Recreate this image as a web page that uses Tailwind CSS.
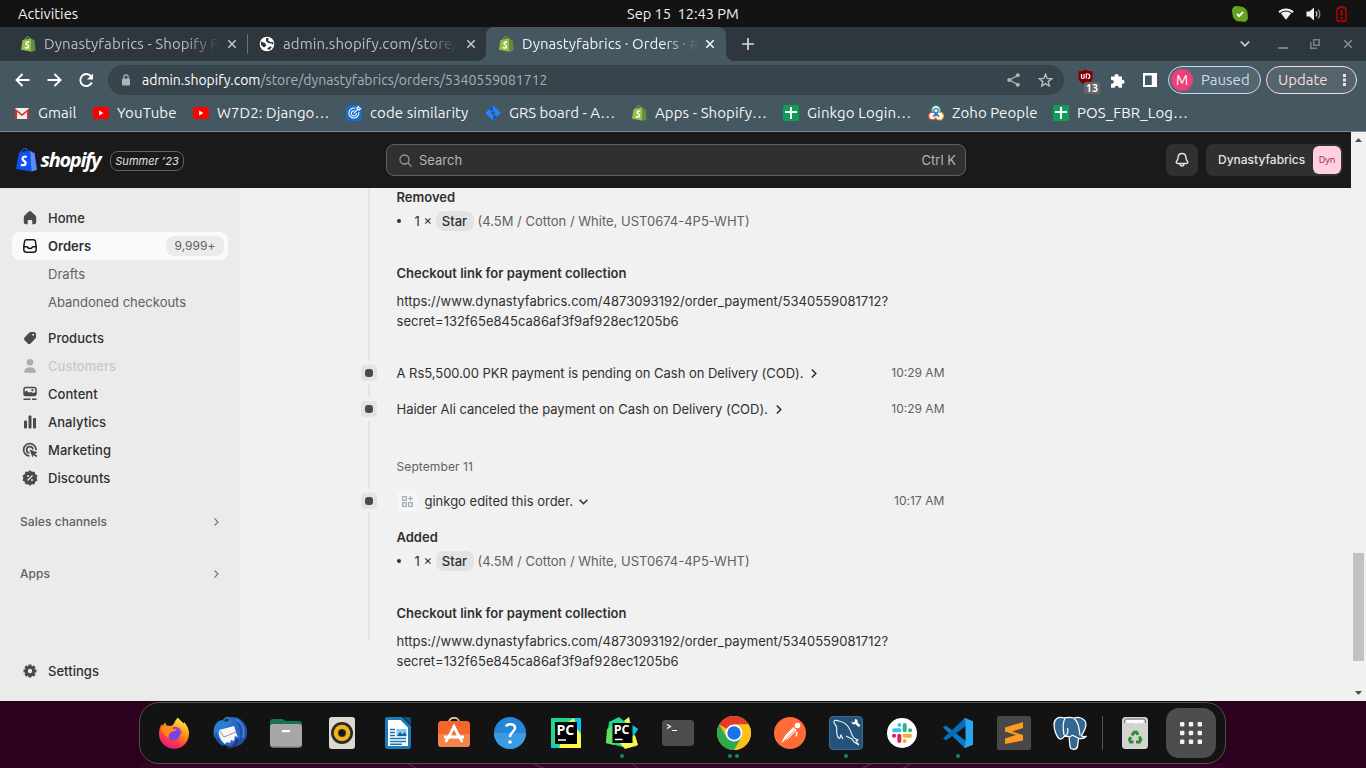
<!DOCTYPE html>
<html lang="en">
<head>
<meta charset="utf-8">
<title>Dynastyfabrics · Orders</title>
<script src="https://cdn.jsdelivr.net/npm/@tailwindcss/browser@4"></script>
</head>
<body class="w-[1366px] h-[768px] overflow-hidden flex flex-col bg-[#2c001e] font-['Inter',sans-serif] text-[13px] leading-5 text-[#303030]">

<svg class="hidden">
  <symbol id="bag" viewBox="0 0 16 16">
    <path d="M2.600 3.900 11 2.200l1.300 13.600L1 13.800z" fill="#95bf47"/>
    <path d="M11 2.300l1.700 1.300 1.900.3 1 10.600-4.600 1.400z" fill="#5e8e3e"/>
    <path d="M4.800 4.600C5 2.300 6.600.6 8 .7c1 .1 1.500 1.100 1.600 2.700" fill="none" stroke="#7fae3b" stroke-width="1"/>
    <path d="M9.200 6.300C8.300 5.700 6.100 5.700 6.100 7.400c0 1.500 2.600 1.500 2.400 3.200-.2 1.700-2.300 1.800-3.600.8" fill="none" stroke="#fff" stroke-width="1.500"/>
  </symbol>
  <symbol id="yt" viewBox="0 0 16 12"><rect width="16" height="12" rx="2.500" fill="#f00"/><path d="M6.200 3.500v5L10.400 6z" fill="#fff"/></symbol>
  <symbol id="sheet" viewBox="0 0 16 16"><rect width="16" height="16" rx="1.500" fill="#0f9d58"/><path d="M7 2h2v4h5v2H9v6H7V8H2V6h5z" fill="#fff"/></symbol>
  <symbol id="x" viewBox="0 0 10 10"><path d="M1.300 1.300l7.400 7.400M8.700 1.300L1.300 8.700" fill="none" stroke="currentColor" stroke-width="1.500"/></symbol>
</svg>

<!-- System bar -->
<div class="h-[27px] shrink-0 bg-[#131313] text-[#f2f2f2] font-[Ubuntu,'Noto_Sans',sans-serif] text-[14.67px] leading-[27px] flex relative">
  <span class="ml-[18px] w-[200px]">Activities</span>
  <span class="absolute left-[627px] whitespace-pre tracking-[-0.05px]">Sep 15  12:43 PM</span>
  <div class="ml-auto flex items-center pr-[19.5px]">
    <svg class="w-4 h-4 mr-[29.500px]" viewBox="0 0 16 16"><path d="M5 0c1.500 0 2 .5 3.500.5A7.500 7.500 0 0 1 15.700 9c0 1 .3 1.500.3 2.500A4.500 4.500 0 0 1 11.500 16c-1.500 0-2-.4-3.500-.4A7.500 7.500 0 0 1 .4 8C.4 6.500 0 6 0 4.800A4.800 4.800 0 0 1 5 0z" fill="#62a420"/><path d="M5 8l2.200 2.200L11 6" fill="none" stroke="#fff" stroke-width="1.800"/></svg>
    <svg class="w-4 h-3 mr-3" viewBox="0 0 16 12"><path d="M.3 3.600a11 11 0 0 1 15.400 0L14.300 5a9 9 0 0 0-12.600 0zM2.900 5.300a8 8 0 0 1 10.200 0L8 11.800z" fill="#f2f2f2"/></svg>
    <svg class="w-4 h-3.5 mr-[14px]" viewBox="0 0 16 14"><path d="M.5 4.500h3L8 .5v13l-4.500-4h-3z" fill="#f2f2f2"/><path d="M9.800 4.500a3.500 3.500 0 0 1 0 5" fill="none" stroke="#ccc" stroke-width="1.300"/><path d="M12 2.500a6.500 6.500 0 0 1 0 9" fill="none" stroke="#8b8b8b" stroke-width="1.300"/></svg>
    <svg class="w-[11px] h-4" viewBox="0 0 11 16"><path d="M3.500 2V1h4v1h1.500q1 0 1 1v11q0 1-1 1H2q-1 0-1-1V3q0-1 1-1z" fill="none" stroke="#c80000" stroke-width="1.300"/><path d="M5.500 4v5.500M5.500 11v2" stroke="#c80000" stroke-width="1.800"/></svg>
  </div>
</div>

<!-- Tab strip -->
<div class="h-[34px] shrink-0 bg-[#2d373d] text-[#b9bfc3] font-[Ubuntu,'Noto_Sans',sans-serif] text-[15px] leading-[34px] flex items-center">
  <div class="w-[247px] shrink-0 pl-5 flex items-center">
    <svg class="w-4 h-4 shrink-0"><use href="#bag"/></svg>
    <span class="ml-2 w-[176px] whitespace-nowrap tracking-[0.08px] [mask-image:linear-gradient(to_right,#000_80%,transparent)]">Dynastyfabrics - Shopify P</span>
    <svg class="ml-[7px] w-[10px] h-[10px] text-[#c6cacd]"><use href="#x"/></svg>
  </div>
  <div class="w-px h-5 bg-[#66737b]"></div>
  <div class="w-[238px] shrink-0 pl-[11px] flex items-center">
    <svg class="w-4 h-4 shrink-0" viewBox="0 0 16 16"><circle cx="8" cy="8" r="7.300" fill="#fff"/><path d="M2 5.500l4 1.500 1.500 2.500L5 11.500 2 9zM7 2l3 .5L9 4.500 11.500 6H14l.5 3-2-1.500L9 7 7 5z" fill="#2d373d"/><path d="M8 12.500l3-2 2 .5-2.500 3z" fill="#2d373d"/></svg>
    <span class="ml-2 w-[174px] whitespace-nowrap tracking-[0.08px] [mask-image:linear-gradient(to_right,#000_82%,transparent)]">admin.shopify.com/store/</span>
    <svg class="ml-[9px] w-[10px] h-[10px] text-[#c6cacd]"><use href="#x"/></svg>
  </div>
  <div class="w-[240px] h-[34px] shrink-0 pl-3 flex items-center bg-[#455760] rounded-t-lg text-[#f0f2f3] relative">
    <span class="absolute -left-2 bottom-0 w-2 h-2 bg-[radial-gradient(circle_at_0_0,transparent_7.5px,#455760_8px)]"></span>
    <span class="absolute -right-2 bottom-0 w-2 h-2 bg-[radial-gradient(circle_at_100%_0,transparent_7.5px,#455760_8px)]"></span>
    <svg class="w-4 h-4 shrink-0"><use href="#bag"/></svg>
    <span class="ml-2 w-[176px] whitespace-nowrap tracking-[0.04px] [mask-image:linear-gradient(to_right,#000_80%,transparent)]">Dynastyfabrics · Orders · #</span>
    <svg class="ml-[7px] w-[10px] h-[10px] text-white"><use href="#x"/></svg>
  </div>
  <svg class="ml-4 w-3 h-3" viewBox="0 0 12 12"><path d="M6 0v12M0 6h12" stroke="#d5d9db" stroke-width="1.700"/></svg>
  <svg class="ml-auto w-[10px] h-2" viewBox="0 0 10 8"><path d="M.8 1.500L5 5.800l4.200-4.300" fill="none" stroke="#cfd3d5" stroke-width="1.700"/></svg>
  <svg class="ml-[28px] w-[10px] h-[10px]" viewBox="0 0 10 10"><path d="M0 9h10" stroke="#77848b" stroke-width="1.900"/></svg>
  <svg class="ml-[22px] w-[10px] h-[10px]" viewBox="0 0 10 10"><path d="M3.700.8h5.500v5.500H3.700zM.8 3v6.200H7" fill="none" stroke="#77848b" stroke-width="1.500"/></svg>
  <svg class="ml-[23px] mr-[13px] w-[10px] h-[10px] text-[#87939a]"><use href="#x"/></svg>
</div>

<!-- Toolbar -->
<div class="h-[38px] shrink-0 bg-[#455760] font-[Ubuntu,'Noto_Sans',sans-serif] text-[14px] flex items-center text-white">
  <svg class="ml-[15px] w-[15px] h-[14px]" viewBox="0 0 15 14"><path d="M14.500 7H1.800M7.500 1L1.500 7l6 6" fill="none" stroke="#fff" stroke-width="1.900"/></svg>
  <svg class="ml-[17px] w-[15px] h-[14px]" viewBox="0 0 15 14"><path d="M.5 7h12.700M7.500 1l6 6-6 6" fill="none" stroke="#fff" stroke-width="1.900"/></svg>
  <svg class="ml-[17px] w-[15px] h-[15px]" viewBox="0 0 15 15"><path d="M12.800 9.500A6 6 0 1 1 12 3.300" fill="none" stroke="#fff" stroke-width="1.900"/><path d="M14 .5v6H8z" fill="#fff"/></svg>
  <div class="ml-[14px] w-[956px] h-[30px] rounded-full bg-[#38444b] flex items-center shrink-0 pl-[14px] text-[#a9b2b7]">
    <svg class="w-2 h-3" viewBox="0 0 8 12"><rect y="4.500" width="8" height="7" rx=".8" fill="#adb5b9"/><path d="M1.800 5V3a2.200 2.200 0 0 1 4.400 0v2" fill="none" stroke="#adb5b9" stroke-width="1.200"/></svg>
    <span class="ml-3 whitespace-nowrap"><span class="text-white">admin.shopify.com</span>/store/dynastyfabrics/orders/5340559081712</span>
    <svg class="ml-auto w-[13px] h-[14px]" viewBox="0 0 13 14"><path d="M11 2.300L2.500 7l8.500 4.700" fill="none" stroke="#adb5b9" stroke-width="1.300"/><circle cx="10.800" cy="2.200" r="2" fill="#adb5b9"/><circle cx="2.200" cy="7" r="2" fill="#adb5b9"/><circle cx="10.800" cy="11.800" r="2" fill="#adb5b9"/></svg>
    <svg class="ml-[18px] mr-[11px] w-[15px] h-[14px]" viewBox="0 0 15 14"><path d="M7.500 1.200l1.700 4.200 4.500.3-3.500 2.900 1.100 4.400-3.800-2.400L3.700 13l1.100-4.400L1.300 5.700l4.500-.3z" fill="none" stroke="#b5bdc1" stroke-width="1.400"/></svg>
  </div>
  <div class="relative ml-[14px] w-[22px] h-[22px] shrink-0">
    <svg class="w-[15px] h-4" viewBox="0 0 15 16"><path d="M7.500.5C9.500 2 12 2.300 14.500 2.300V9c0 3.500-4 5.500-7 7-3-1.500-7-3.500-7-7V2.300C3 2.300 5.500 2 7.500.5z" fill="#800000"/><path d="M3.500 5v3.300q0 1.200 1.300 1.200t1.300-1.200V5M8.300 9.500V5h1.500q2 0 2 2.200T9.800 9.500" fill="none" stroke="#fff" stroke-width="1.200"/></svg>
    <span class="absolute left-[6px] top-[13px] w-4 h-[12px] bg-[#666] rounded-[2px] text-[11px] font-bold leading-[12px] text-center">13</span>
  </div>
  <svg class="ml-[10px] w-[15px] h-[15px]" viewBox="0 0 15 15"><path d="M1 3.500h3.700a2 2 0 1 1 3.800 0H12v3.400a2 2 0 1 1 0 3.800v4H8.700a2 2 0 0 0-4 0H1v-4a2 2 0 1 0 0-3.700z" fill="#fff"/></svg>
  <svg class="ml-[18px] w-[14px] h-[14px]" viewBox="0 0 14 14"><path d="M0 0h14v14H0zM2 2.500v9.500h6.800V2.500z" fill="#fff" fill-rule="evenodd"/></svg>
  <div class="ml-[11px] w-[93px] h-7 shrink-0 rounded-full border border-[#c6d8f8] bg-[#54666f] flex items-center pl-[2px] text-[#c9daf8]">
    <span class="w-[22px] h-[22px] rounded-full bg-[#ec407a] text-white text-center leading-[22px] text-[14px]">M</span>
    <span class="ml-2 text-[15px]">Paused</span>
  </div>
  <div class="ml-[5px] w-[91px] h-7 shrink-0 rounded-full border border-[#f6dcd8] bg-[#53646c] flex items-center pl-[11px] text-[#f8dedb] text-[15px]">
    <span class="w-[53px]">Update</span>
    <svg class="ml-3 w-[3px] h-3" viewBox="0 0 3 12"><path d="M0 0h3v3H0zM0 4.500h3v3H0zM0 9h3v3H0z" fill="#f8dedb"/></svg>
  </div>
</div>

<!-- Bookmarks -->
<div class="h-[33px] shrink-0 bg-[#455760] border-b border-[#7f8b92] font-[Ubuntu,'Noto_Sans',sans-serif] text-[15px] tracking-[0.09px] text-[#f3f5f6] flex items-center pl-[14px] pb-[4px] whitespace-nowrap">
  <svg class="w-4 h-4 shrink-0" viewBox="0 0 16 16"><rect x="1" y="3" width="14" height="11" rx="1" fill="#eee"/><path d="M1 14V3.500L8 9l7-5.500V14h-2V7L8 11 3 7v7z" fill="#d93025"/></svg>
  <span class="ml-2 w-[39px]">Gmail</span>
  <svg class="ml-4 w-4 h-3 shrink-0"><use href="#yt"/></svg>
  <span class="ml-2 w-[60px]">YouTube</span>
  <svg class="ml-4 w-4 h-3 shrink-0"><use href="#yt"/></svg>
  <span class="ml-2 w-[113px]">W7D2: Django…</span>
  <svg class="ml-4 w-4 h-4 shrink-0" viewBox="0 0 16 16"><rect width="16" height="16" rx="4" fill="#1a6cc4"/><path d="M9.500 3.300A5 5 0 1 0 12.800 7M8.500 5.800A2.600 2.600 0 1 0 10.500 8M7.700 8.300L12 4M11 2.500l.5 2 2 .5 1-1.500-1.500-.5L12.500 1.500z" fill="none" stroke="#fff" stroke-width="1.100"/></svg>
  <span class="ml-2 w-[99px]">code similarity</span>
  <svg class="ml-4 w-4 h-4 shrink-0" viewBox="0 0 16 16"><path d="M8 .3L15.700 8 8 15.700.3 8z" fill="#2684ff"/><path d="M8 5.300v-5L4 4.300q1.500 3 4 1zM8 10.700v5l4-4q-1.500-3-4-1z" fill="#1257c4"/><path d="M8 5.600L10.400 8 8 10.400 5.600 8z" fill="#455760"/></svg>
  <span class="ml-2 w-[106px] tracking-[-0.03px]">GRS board - A…</span>
  <svg class="ml-4 w-4 h-4 shrink-0"><use href="#bag"/></svg>
  <span class="ml-2 w-[112px]">Apps - Shopify…</span>
  <svg class="ml-4 w-4 h-4 shrink-0"><use href="#sheet"/></svg>
  <span class="ml-2 w-[105px] tracking-[0.15px]">Ginkgo Login…</span>
  <svg class="ml-4 w-4 h-4 shrink-0" viewBox="0 0 16 16"><circle cx="8" cy="5" r="4.300" fill="#fff" stroke="#33a56a" stroke-width="1.300"/><circle cx="4.500" cy="11" r="3.800" fill="#fff" stroke="#e0483c" stroke-width="1.300"/><circle cx="11.500" cy="11" r="3.800" fill="#fff" stroke="#f2b632" stroke-width="1.300"/><circle cx="8" cy="5.500" r="2.200" fill="none" stroke="#3d7fd0" stroke-width="1.300"/><path d="M8 7.500L5 12M8 7.500l3 4.500M8 8v3" stroke="#3d7fd0" stroke-width="1.500"/></svg>
  <span class="ml-2 w-[85px]">Zoho People</span>
  <svg class="ml-4 w-4 h-4 shrink-0"><use href="#sheet"/></svg>
  <span class="ml-2">POS_FBR_Log…</span>
</div>

<!-- Page -->
<div class="h-[569px] shrink-0 flex bg-[#f1f1f1]">
  <div class="w-[1351px] flex flex-col">
    <header class="h-14 shrink-0 bg-[#1a1a1a] flex items-center text-[#e3e3e3] relative">
      <svg class="ml-4 w-[21px] h-6 shrink-0" viewBox="0 0 21 24"><path d="M3 4.500L14 2.500l1.500 21L0 21z" fill="#0d53f2"/><path d="M14 2.500l2.500 2 2 .3L21 21.800l-5.500 1.700z" fill="#5b8cff"/><path d="M5 5C5.500 2.500 7.500.6 9 .6S11.500 2 12 4.500" fill="none" stroke="#1c4fd6" stroke-width="1.400"/><path d="M10.800 9.100C9.500 8.300 6.500 8.500 6.500 10.800c0 2.200 3.400 2.200 3.200 4.500-.2 2.300-3 2.300-4.700 1.200" fill="none" stroke="#fff" stroke-width="2.200"/></svg>
      <span class="ml-[3.5px] w-[62.5px] text-white text-[20px] font-bold italic font-['Open_Sans',sans-serif] tracking-[-1.3px] leading-6">shopify</span>
      <span class="ml-[7px] w-[74px] h-5 shrink-0 rounded-[8px] border border-[#616161] italic text-[11px] leading-[18px] tracking-[0.02px] text-center mt-px">Summer ’23</span>
      <div class="absolute left-[386px] top-3 w-[580px] h-8 rounded-lg border border-[#616161] bg-[#303030] flex items-center px-[9px] text-[#b5b5b5]">
        <svg class="ml-[3px] w-[13px] h-[13px]" viewBox="0 0 13 13"><circle cx="5.500" cy="5.500" r="4.500" fill="none" stroke="#999" stroke-width="1.300"/><path d="M9 9l3.400 3.400" stroke="#999" stroke-width="1.300"/></svg>
        <span class="ml-[7px]">Search</span><span class="ml-auto">Ctrl K</span>
      </div>
      <div class="ml-auto w-8 h-8 rounded-lg bg-[#303030] flex items-center justify-center">
        <svg class="w-[14px] h-4" viewBox="0 0 14 16"><path d="M7 1.500c-2.500 0-3.700 1.800-3.900 3.800-.2 2.200-.5 2.900-1.300 3.700-1 1-.7 2.600.8 2.600h8.800c1.500 0 1.800-1.600.8-2.600-.8-.8-1.100-1.500-1.300-3.700C10.700 3.300 9.500 1.500 7 1.500zM5.200 12c0 2.600 3.600 2.600 3.600 0" fill="none" stroke="#e3e3e3" stroke-width="1.500"/></svg>
      </div>
      <div class="ml-2 mr-2 w-[137px] h-8 rounded-lg bg-[#303030] flex items-center pl-3">
        <span class="font-medium text-[12px] w-[95px] leading-7">Dynastyfabrics</span>
        <span class="w-7 h-7 rounded-md bg-[#ffd1e0] text-[#a81e6b] text-[9px] leading-7 text-center font-['Noto_Sans',sans-serif]">Dyn</span>
      </div>
    </header>

    <div class="flex-1 flex min-h-0">
      <nav class="w-60 shrink-0 bg-[#ebebeb] px-3 pt-[15px] flex flex-col font-medium tracking-[0.04px] border-t border-[#e3e3e3]">
        <a class="h-7 shrink-0 flex items-center pl-2.5 gap-2.5"><svg class="w-4 h-4" viewBox="0 0 16 16"><path d="M6.800 1.600Q8 .6 9.200 1.600l4 3.600q1 .9 1 2.200V12q0 2.300-2.300 2.300H10.300V11a1 1 0 0 0-1-1H6.700a1 1 0 0 0-1 1v3.300H4.100Q1.800 14.300 1.800 12V7.400q0-1.300 1-2.200z" fill="#4a4a4a"/></svg>Home</a>
        <a class="h-7 shrink-0 flex items-center pl-2.5 gap-2.5 bg-[#fafafa] rounded-lg font-semibold pr-1"><svg class="w-4 h-4" viewBox="0 0 16 16"><path d="M4.500 1.800h7q1.600 0 1.900 1.600l.8 5v3.200q0 2.600-2.600 2.600H4.400q-2.600 0-2.600-2.600V8.400l.8-5Q2.900 1.800 4.500 1.800zM1.800 8.700h3q.7 0 1 .7.500 1.100 2.200 1.100t2.200-1.100q.3-.7 1-.7h3" fill="none" stroke="#1a1a1a" stroke-width="1.500"/></svg>Orders<span class="ml-auto h-5 w-[58px] rounded-lg bg-[#ebebeb] text-[12px] leading-5 text-center font-normal text-[#616161]">9,999+</span></a>
        <a class="h-7 shrink-0 flex items-center pl-9 font-normal text-[#616161]">Drafts</a>
        <a class="h-7 shrink-0 flex items-center pl-9 font-normal tracking-normal text-[#616161]">Abandoned checkouts</a>
        <a class="mt-2 h-7 shrink-0 flex items-center pl-2.5 gap-2.5"><svg class="w-4 h-4" viewBox="0 0 16 16"><path fill-rule="evenodd" d="M9 2h3q2 0 2 2v3q0 1-.8 1.800l-4.600 4.600q-1.400 1.400-2.800 0L2.600 10.200q-1.400-1.400 0-2.800L7.200 2.800Q8 2 9 2zm2.200 3.800a1 1 0 1 0 0-2 1 1 0 0 0 0 2z" fill="#4a4a4a"/></svg>Products</a>
        <a class="h-7 shrink-0 flex items-center pl-2.5 gap-2.5 text-[#c8c8c8]"><svg class="w-4 h-4" viewBox="0 0 16 16"><circle cx="8" cy="4.300" r="3.300" fill="#adadad"/><path d="M2.200 13.500C2.800 10.500 5 9.300 8 9.300s5.200 1.200 5.800 4.200q.2 1.300-1 1.300H3.200q-1.200 0-1-1.300z" fill="#adadad"/></svg>Customers</a>
        <a class="h-7 shrink-0 flex items-center pl-2.5 gap-2.5"><svg class="w-4 h-4" viewBox="0 0 16 16"><path d="M4 1.500h8q2 0 2 2v4q0 2-2 2H4q-2 0-2-2v-4q0-2 2-2z" fill="none" stroke="#4a4a4a" stroke-width="1.500"/><path d="M2 6.500l2.500-2 2.500 2.200L8.500 5.700 11 7l3-1v3.800H2z" fill="#4a4a4a"/><circle cx="10.400" cy="4.200" r="1.100" fill="#4a4a4a"/><path d="M1.500 13.300h7M10 13.300h4.500" stroke="#4a4a4a" stroke-width="1.500"/></svg>Content</a>
        <a class="h-7 shrink-0 flex items-center pl-2.5 gap-2.5"><svg class="w-4 h-4" viewBox="0 0 16 16"><rect x="2" y="6.500" width="3" height="8" rx="1" fill="#4a4a4a"/><rect x="6.500" y="1.500" width="3" height="13" rx="1" fill="#4a4a4a"/><rect x="11" y="4" width="3" height="10.500" rx="1" fill="#4a4a4a"/></svg>Analytics</a>
        <a class="h-7 shrink-0 flex items-center pl-2.5 gap-2.5"><svg class="w-4 h-4" viewBox="0 0 16 16"><path d="M14 8.300A6.200 6.200 0 1 0 7.500 14M11 7.500A3.200 3.200 0 1 0 7.500 11" fill="none" stroke="#4a4a4a" stroke-width="1.700"/><path d="M7.500 7.500l8.200 3-2.700 1.300 2.300 2.300-1.200 1.200-2.400-2.300-1.200 2.500z" fill="#4a4a4a"/></svg>Marketing</a>
        <a class="h-7 shrink-0 flex items-center pl-2.5 gap-2.5"><svg class="w-4 h-4" viewBox="0 0 16 16"><path d="M8 .3l2 1.500 2.700-.1.500 2.500 2.300 1.400-.9 2.400.9 2.400-2.300 1.400-.5 2.500-2.700-.1L8 15.700l-2-1.500-2.700.1-.5-2.500L.5 10.400 1.400 8 .5 5.600l2.300-1.400.5-2.500 2.700.1z" fill="#4a4a4a"/><path d="M5.500 10.500l5-5" stroke="#ebebeb" stroke-width="1.300"/><circle cx="6" cy="6" r="1" fill="#ebebeb"/><circle cx="10" cy="10" r="1" fill="#ebebeb"/></svg>Discounts</a>
        <a class="mt-4 h-7 shrink-0 flex items-center justify-between pl-2 pr-2 text-[12px] tracking-[0.06px] text-[#616161]">Sales channels<svg class="w-2 h-2" viewBox="0 0 8 8"><path d="M2.500.5L6 4 2.500 7.500" fill="none" stroke="#7a7a7a" stroke-width="1.200"/></svg></a>
        <a class="mt-6 h-7 shrink-0 flex items-center justify-between pl-2 pr-2 text-[12px] tracking-[0.06px] text-[#616161]">Apps<svg class="w-2 h-2" viewBox="0 0 8 8"><path d="M2.500.5L6 4 2.500 7.500" fill="none" stroke="#7a7a7a" stroke-width="1.200"/></svg></a>
        <a class="mt-auto mb-4 h-7 shrink-0 flex items-center pl-2.5 gap-2.5"><svg class="w-4 h-4" viewBox="0 0 16 16"><path d="M8 1.500v13M1.500 8h13M3.400 3.400l9.200 9.200M12.600 3.400l-9.200 9.200" stroke="#4a4a4a" stroke-width="3"/><circle cx="8" cy="8" r="3.700" fill="none" stroke="#4a4a4a" stroke-width="3"/><circle cx="8" cy="8" r="2.200" fill="#ebebeb"/></svg>Settings</a>
      </nav>

      <main class="flex-1 pl-[117px] overflow-hidden font-normal">
        <section class="flex h-[173px]">
          <div class="w-6 flex justify-center"><div class="w-0.5 bg-[#e3e3e3]"></div></div>
          <div class="ml-[15.5px] -mt-px">
            <p class="font-semibold">Removed</p>
            <p class="mt-1 flex items-center text-[#616161]"><span class="w-1 h-1 rounded-full bg-[#303030] mr-[14px]"></span><span class="w-[21px] text-[#303030]">1 ×</span><span class="h-5 w-[38px] text-center rounded-lg bg-[#e3e3e3] text-[#303030] font-medium">Star</span><span class="ml-1">(4.5M / Cotton / White, UST0674-4P5-WHT)</span></p>
            <p class="mt-8 font-semibold">Checkout link for payment collection</p>
            <p class="mt-2 tracking-[0.03px]">https://www.dynastyfabrics.com/4873093192/order_payment/5340559081712?<br>secret=132f65e845ca86af3f9af928ec1205b6</p>
          </div>
        </section>
        <section class="flex h-9">
          <div class="w-6 flex flex-col items-center"><div class="h-6 flex items-center"><div class="w-4 h-4 rounded bg-[#e3e3e3] flex items-center justify-center"><div class="w-2 h-2 rounded-[3px] bg-[#4a4a4a]"></div></div></div><div class="w-0.5 flex-1 bg-[#e3e3e3]"></div></div>
          <div class="ml-[15.5px] w-[548px] h-6 flex items-center"><span class="tracking-[-0.035px]">A Rs5,500.00 PKR payment is pending on Cash on Delivery (COD).</span><svg class="ml-[6px] w-[9px] h-[9px]" viewBox="0 0 8 8"><path d="M2.500.5L6 4 2.500 7.500" fill="none" stroke="#303030" stroke-width="1.400"/></svg><span class="ml-auto text-[12px] text-[#616161]">10:29 AM</span></div>
        </section>
        <section class="flex h-[92px]">
          <div class="w-6 flex flex-col items-center"><div class="h-6 flex items-center"><div class="w-4 h-4 rounded bg-[#e3e3e3] flex items-center justify-center"><div class="w-2 h-2 rounded-[3px] bg-[#4a4a4a]"></div></div></div><div class="w-0.5 flex-1 bg-[#e3e3e3]"></div></div>
          <div class="ml-[15.5px] w-[548px]">
            <div class="h-6 flex items-center"><span class="tracking-[-0.02px]">Haider Ali canceled the payment on Cash on Delivery (COD).</span><svg class="ml-[6px] w-[9px] h-[9px]" viewBox="0 0 8 8"><path d="M2.500.5L6 4 2.500 7.500" fill="none" stroke="#303030" stroke-width="1.400"/></svg><span class="ml-auto text-[12px] text-[#616161]">10:29 AM</span></div>
            <p class="mt-9 text-[12px] tracking-[0.1px] text-[#616161]">September 11</p>
          </div>
        </section>
        <section class="flex h-[212px]">
          <div class="w-6 flex flex-col items-center"><div class="h-6 flex items-center"><div class="w-4 h-4 rounded bg-[#e3e3e3] flex items-center justify-center"><div class="w-2 h-2 rounded-[3px] bg-[#4a4a4a]"></div></div></div><div class="w-0.5 h-[126px] bg-[#e3e3e3]"></div></div>
          <div class="ml-[15.5px] w-[548px]">
            <div class="h-6 flex items-center"><span class="w-5 h-5 ml-[0.5px] rounded bg-[#f6f6f7] flex items-center justify-center"><svg class="w-[11px] h-[11px]" viewBox="0 0 10 10"><path d="M.6.600h3.300v3.300H.6zM.6 6.100h3.300v3.300H.6zM6.100 6.100h3.300v3.300H6.100zM7.700.200v4.200M5.600 2.300h4.200" fill="none" stroke="#a4adb8" stroke-width="1.200"/></svg></span><span class="ml-[7.5px]">ginkgo edited this order.</span><svg class="ml-[6px] w-[9px] h-[9px]" viewBox="0 0 8 8"><path d="M.5 2.500L4 6l3.500-3.500" fill="none" stroke="#303030" stroke-width="1.400"/></svg><span class="ml-auto text-[12px] tracking-[0.06px] text-[#616161]">10:17 AM</span></div>
            <p class="mt-[14px] font-semibold">Added</p>
            <p class="mt-1 flex items-center text-[#616161]"><span class="w-1 h-1 rounded-full bg-[#303030] mr-[14px]"></span><span class="w-[21px] text-[#303030]">1 ×</span><span class="h-5 w-[38px] text-center rounded-lg bg-[#e3e3e3] text-[#303030] font-medium">Star</span><span class="ml-1">(4.5M / Cotton / White, UST0674-4P5-WHT)</span></p>
            <p class="mt-8 font-semibold">Checkout link for payment collection</p>
            <p class="mt-2 tracking-[0.03px]">https://www.dynastyfabrics.com/4873093192/order_payment/5340559081712?<br>secret=132f65e845ca86af3f9af928ec1205b6</p>
          </div>
        </section>
      </main>
    </div>
  </div>
  <div class="w-[15px] bg-[#f1f1f1] flex flex-col items-center">
    <svg class="mt-[6px] w-[7px] h-1" viewBox="0 0 7 4"><path d="M0 4L3.500 0 7 4z" fill="#505050"/></svg>
    <div class="mt-[411px] w-[11px] h-[108px] bg-[#c1c1c1]"></div>
    <svg class="mt-[30px] w-[7px] h-1" viewBox="0 0 7 4"><path d="M0 0l3.500 4L7 0z" fill="#505050"/></svg>
  </div>
</div>

<!-- Dock -->
<div class="flex-1 bg-[#2c001e] border-t border-[#140a10] relative">
  <svg class="absolute inset-0 w-full h-full" viewBox="0 0 1366 66"><path d="M140 61h1085v5H140z" fill="#330426"/><path d="M405 60l15 8M530 60l18 8M640 68l-10-8M875 60l-16 8M914 60l-14 8" stroke="#5b1a55" stroke-width="1.500"/></svg>
  <div class="absolute left-[139px] top-0 w-[1087px] h-[62px] rounded-[20px] border border-[#505050] bg-[#131313] flex items-center pl-[17px]">
    <div class="grid grid-cols-[repeat(17,56px)] h-[60px] items-center -ml-[11px] justify-items-center shrink-0 [&>div]:relative">
      <!-- Firefox -->
      <div><svg class="w-8 h-8" viewBox="0 0 32 32"><defs><linearGradient id="ff" x1=".8" y1="0" x2=".3" y2="1"><stop offset="0" stop-color="#fff44f"/><stop offset=".4" stop-color="#ff980e"/><stop offset=".75" stop-color="#ff3647"/><stop offset="1" stop-color="#e31587"/></linearGradient></defs><path d="M20 .5c1 2 4 4 5.500 6 .5-.5.500-1 .5-1.500 3 3 5 7 5 11.500A15 15 0 0 1 1 17c0-4 1-7.500 3-10l.5 2L7 5.500l1.500 3L13 9c2-1 3-2 3.500-3.500C17 4 18.500 2 20 .5z" fill="url(#ff)"/><circle cx="15.500" cy="17" r="6.500" fill="#7542e5"/><path d="M4 11c4-3 9-2 11 0l4 2c-3 2-5 1-7 3s-1 5-1 5C7 19 4 15 4 11z" fill="#ff8a16"/><path d="M15 11c5-1 8 2 7.500 6" fill="none" stroke="#9b3be0" stroke-width="2"/></svg></div>
      <!-- Thunderbird -->
      <div><svg class="w-[34px] h-[34px]" viewBox="0 0 34 34"><circle cx="19" cy="16" r="15" fill="#2a68c4"/><path d="M20 1.500A15 15 0 0 1 22 31c7-5 8-19-2-29.500z" fill="#1f4fa6"/><path d="M22 3c7 3 10 10 8 19" fill="none" stroke="#3f86dc" stroke-width="2"/><path d="M1 20C-1 9 5 4 10 4c1-2 4-4 6-3l1 2c3 1 2 5-1 7l-8 4-4 10z" fill="#2b7fd0"/><path d="M10 5l4-3 2 1-1 3z" fill="#16406f"/><path d="M2 17l2 0c0 5 3 9 7 11l-1 2C5 28 2 23 2 17z" fill="#1d57a8"/><path d="M6 14l15-4 3 9 1 2-3-1-1 5-3-1-1 3-3-1-2 2c-4-3-7-8-6-14z" fill="#f7f7fa"/><path d="M6 14l5 7 12-5" fill="none" stroke="#8d94a3" stroke-width="1"/><path d="M13 32c6-1 9-5 10-10l3 1-1 5c-2 3-6 5-12 4z" fill="#24398c"/></svg></div>
      <!-- Files -->
      <div><svg class="w-8 h-[30px]" viewBox="0 0 32 30"><path d="M0 4q0-3 3-3h9q2 0 3 2h14q3 0 3 3v8H0z" fill="#15735a"/><rect y="6" width="32" height="23.500" rx="3" fill="#a7a7a7"/><path d="M0 27q1 2 3 2h26q2 0 3-2" fill="none" stroke="#777" stroke-width="1"/><rect x="12" y="12" width="8" height="2.200" fill="#fff"/></svg></div>
      <!-- Rhythmbox -->
      <div><svg class="w-8 h-8" viewBox="0 0 32 32"><rect x="3" width="26" height="32" rx="3" fill="#dfdacf"/><circle cx="16" cy="16" r="11" fill="#2b2b2b"/><circle cx="16" cy="16" r="8.300" fill="#efb41d"/><circle cx="16" cy="16" r="4" fill="#3b3526"/><circle cx="16" cy="16" r="3" fill="#151515"/></svg></div>
      <!-- Writer -->
      <div><svg class="w-8 h-8" viewBox="0 0 32 32"><path d="M5.500 0H20l9 9v20q0 3-3 3H6q-3 0-3-3V2.500Q3 0 5.500 0z" fill="#1c7cb9"/><path d="M21 0h6q2 0 2 2v6z" fill="#0b4f85"/><path d="M6 3h12.500L26 10.500V29H6z" fill="#fff"/><path d="M8 12.500h5M8 15.500h5M8 18.500h5M8 21.500h16M8 24.500h16M8 27.200h12" stroke="#1576b5" stroke-width="1.500"/><rect x="14.500" y="12" width="10" height="7.500" fill="#8cc7e8"/><path d="M15 19l3-4 2.500 2.500L23 15l1.500 4z" fill="#135f94"/></svg></div>
      <!-- Software -->
      <div><svg class="w-[34px] h-8" viewBox="0 0 34 32"><path d="M12 5c0-5.500 10-5.500 10 0" fill="none" stroke="#e8c9a0" stroke-width="1.800"/><rect x="1" y="4" width="32" height="26" rx="3.500" fill="#f4662a"/><path d="M1 17h32v9.500q0 3.500-3.500 3.500h-25Q1 30 1 26.500z" fill="#f5834c"/><path d="M11 21.500L17 9.500l6 12M7 20h20M11 20.500l-2.200 4.500M23 20.500l2.200 4.500" fill="none" stroke="#fff" stroke-width="2.800"/></svg></div>
      <!-- Help -->
      <div><svg class="w-8 h-8" viewBox="0 0 32 32"><circle cx="16" cy="16" r="16" fill="#2586d8"/><path d="M0 16a16 16 0 0 0 32 0z" fill="#3b9ae4"/><path d="M12 9.500c1.500-3.500 9-3 9 1.500 0 4-5 4-5 9" fill="none" stroke="#fff" stroke-width="2.500"/><circle cx="16" cy="25" r="1.800" fill="#fff"/></svg></div>
      <!-- PyCharm -->
      <div><svg class="w-[30px] h-[30px]" viewBox="0 0 30 30"><path d="M0 0h30v30H0z" fill="#21d789"/><path d="M21 0h9v16l-7-7z" fill="#07c3f2"/><path d="M17 4l6-4 3 11 4 5v14H8z" fill="#fcf84a"/><path d="M24 3h6v13z" fill="#07c3f2"/><path d="M0 30v-4l8 4z" fill="#07c3f2"/><path d="M4 4h22v22H4z" fill="#000"/><path d="M7 22h8" stroke="#fff" stroke-width="1.500"/><text x="5.500" y="16.500" fill="#fff" font-family="Open Sans" font-weight="700" font-size="14">PC</text></svg></div>
      <!-- PyCharm CE -->
      <div><svg class="w-8 h-8" viewBox="0 0 32 32"><path d="M3 5l10-5 5 4 5-4 2 7 7 5-4 6 3 11-10 2-12-3L0 26z" fill="#21d789"/><path d="M14 26l15-8 3 10-13 4zM18 4l5-4 1 8z" fill="#fcf84a"/><path d="M25 8l7 4-4 6-4-3z" fill="#07c3f2"/><path d="M1 12l6-3 1 19-8-2z" fill="#5fe05f"/><path d="M6.500 6h20v20h-20z" fill="#000"/><path d="M9 22.500h7.500" stroke="#fff" stroke-width="1.500"/><text x="7.700" y="17" fill="#fff" font-family="Open Sans" font-weight="700" font-size="12.500">PC</text></svg><i class="absolute left-[14px] top-[37px] w-1 h-1 rounded-full bg-[#0e8a5f]"></i></div>
      <!-- Terminal -->
      <div><svg class="w-8 h-[26px]" viewBox="0 0 32 26"><rect width="32" height="26" rx="3.500" fill="#4d4d4d"/><path d="M5 4.500l3.500 2L5 8.500M10 10.500h5" fill="none" stroke="#fff" stroke-width="1.200"/></svg></div>
      <!-- Chrome -->
      <div><svg class="w-[34px] h-[34px]" viewBox="0 0 34 34"><circle cx="17" cy="17" r="17" fill="#fbc116"/><path d="M17 17L2.300 8.500A17 17 0 0 1 31.700 8.500H17z" fill="#e33b2e"/><path d="M17 8.500h14.700A17 17 0 0 1 17 34l7.400-12.700z" fill="#fbc116"/><path d="M9.600 21.300L2.300 8.500A17 17 0 0 0 17 34l7.400-12.700z" fill="#2da94f"/><circle cx="17" cy="17" r="8.500" fill="#fff"/><circle cx="17" cy="17" r="6.700" fill="#1a73e8"/></svg><i class="absolute left-[11px] top-[38px] w-1 h-1 rounded-full bg-[#0e8a5f]"></i><i class="absolute left-[18px] top-[38px] w-1 h-1 rounded-full bg-[#0e8a5f]"></i></div>
      <!-- Postman -->
      <div><svg class="w-8 h-8" viewBox="0 0 32 32"><circle cx="16" cy="16" r="16" fill="#ff6c37"/><circle cx="23.500" cy="8.500" r="2.800" fill="#fff"/><path d="M19.500 10l3 3-8 8.500L7 26l4.500-8zM21 14.500l3 .5-1.500 5-1-1 .5-3z" fill="#fff"/><path d="M10 24l11-11" stroke="#ff6c37" stroke-width=".8"/></svg></div>
      <!-- MySQL Workbench -->
      <div><svg class="w-[34px] h-[34px]" viewBox="0 0 34 34"><rect x=".5" y=".5" width="33" height="33" rx="3.500" fill="#24527a" stroke="#3c6a91"/><path d="M5 6c-.5-2 3-2 5-1 7 1 11 7 13 14l2 3 4 2-2 1 3 4-5-3-2-3c-2-1-4-2-6-3M5 6c0 2 2 3 2.500 5 .5 3-.5 6 1 9 .5 2 2 3 2.500 2s0-2 1-3l2 4" fill="none" stroke="#e6eef5" stroke-width="1.200"/><path d="M26 3l-.5 3-1.500.500-1.500-1c0 2.500 2 3.500 4 2.500L29.500 11l2-1.500-3-3c.5-2-.5-3.500-2.500-3.500z" fill="#fff"/></svg><i class="absolute left-[15px] top-[38px] w-1 h-1 rounded-full bg-[#0e8a5f]"></i></div>
      <!-- Slack -->
      <div><svg class="w-[30px] h-[30px]" viewBox="0 0 30 30"><circle cx="15" cy="15" r="15" fill="#fff"/><g fill="none" stroke-width="4" stroke-linecap="round"><path d="M7 12.300h5.500M12.400 7v.1" stroke="#36c5f0"/><path d="M17.700 7v5.300M23 12.300h.1" stroke="#2eb67d"/><path d="M17.600 17.700H23M17.600 23v.1" stroke="#ecb22e"/><path d="M12.300 17.700V23M7 17.700h.1" stroke="#e01e5a"/></g></svg></div>
      <!-- VS Code -->
      <div><svg class="w-[30px] h-[30px]" viewBox="0 0 30 30"><path d="M0 9.500L3 7.500 23 23v6.500L22 30z" fill="#0879c8"/><path d="M0 20.500l3 2L23 8V.5L22 0z" fill="#0a6bb5"/><path d="M22 0l8 3.200v23.600L22 30l-1.500-1.500c1 .5 2 0 2-1.500V3c0-1.500-1-2-2-1.500z" fill="#2aa5f0"/></svg><i class="absolute left-[13px] top-[36px] w-1 h-1 rounded-full bg-[#0e8a5f]"></i></div>
      <!-- Sublime -->
      <div><svg class="w-[34px] h-[34px]" viewBox="0 0 34 34"><rect width="34" height="34" rx="2" fill="#484848"/><path d="M8 11.500L26 6v6L15 15.500 26 19v5.500L8 28v-5.500l11-3.500-11-3.500z" fill="#ff9a1f"/></svg></div>
      <!-- PostgreSQL -->
      <div><svg class="w-[34px] h-[34px]" viewBox="0 0 34 34"><path d="M11 2C5 0 1 3 1 9c0 5 3 13 6 14 2 .5 3-1 4.500-3l4.500.5c.5 3 .5 7 1 10 .5 3.500 6.500 4 7.500 0l1-8c3 .5 6 0 7.500-2-2 .3-4 .3-4.500-1C32 14 34 8 32 5c-3-4-8-4-11-3-3-1-6-1-10 0z" fill="#336791" stroke="#fff" stroke-width="1.300"/><path d="M12 2.500C9 7 10 13 11 19M21 2.500c4 3 5 8 6 17M11.500 20c3-1 4-4 3-8M17 21c1-1 3-2 4-1l4 2" fill="none" stroke="#fff" stroke-width="1.200"/></svg></div>
    </div>
    <div class="w-px h-[34px] bg-[#555] ml-[4px]"></div>
    <svg class="ml-[19px] w-[26px] h-8" viewBox="0 0 26 32"><rect width="26" height="32" rx="3.500" fill="#d3d3d3"/><path d="M2.500 6V4q0-2 2-2h17q2 0 2 2v2" fill="none" stroke="#777"/><path d="M4 3h18l-1 3.500-4-1-3 1-5-1-4 1z" fill="#fff"/><g fill="none" stroke="#2f8f2f" stroke-width="3"><path d="M10 18.500l2-3.300h2.500l1.500 2.500M17.300 19.500l1.500 3-1.300 2.500H14M11.500 25H8.500l-1-2.500 1.500-2.500"/></g></svg>
    <div class="ml-[18px] w-[50px] h-[50px] shrink-0 rounded-[13px] bg-[#4d4d4d] flex items-center justify-center">
      <svg class="w-[22px] h-[22px]" viewBox="0 0 22 22"><g fill="#f4f4f4"><rect width="4.400" height="4.400" rx="1"/><rect x="8.800" width="4.400" height="4.400" rx="1"/><rect x="17.600" width="4.400" height="4.400" rx="1"/><rect y="8.800" width="4.400" height="4.400" rx="1"/><rect x="8.800" y="8.800" width="4.400" height="4.400" rx="1"/><rect x="17.600" y="8.800" width="4.400" height="4.400" rx="1"/><rect y="17.600" width="4.400" height="4.400" rx="1"/><rect x="8.800" y="17.600" width="4.400" height="4.400" rx="1"/><rect x="17.600" y="17.600" width="4.400" height="4.400" rx="1"/></g></svg>
    </div>
  </div>
</div>
</body>
</html>
